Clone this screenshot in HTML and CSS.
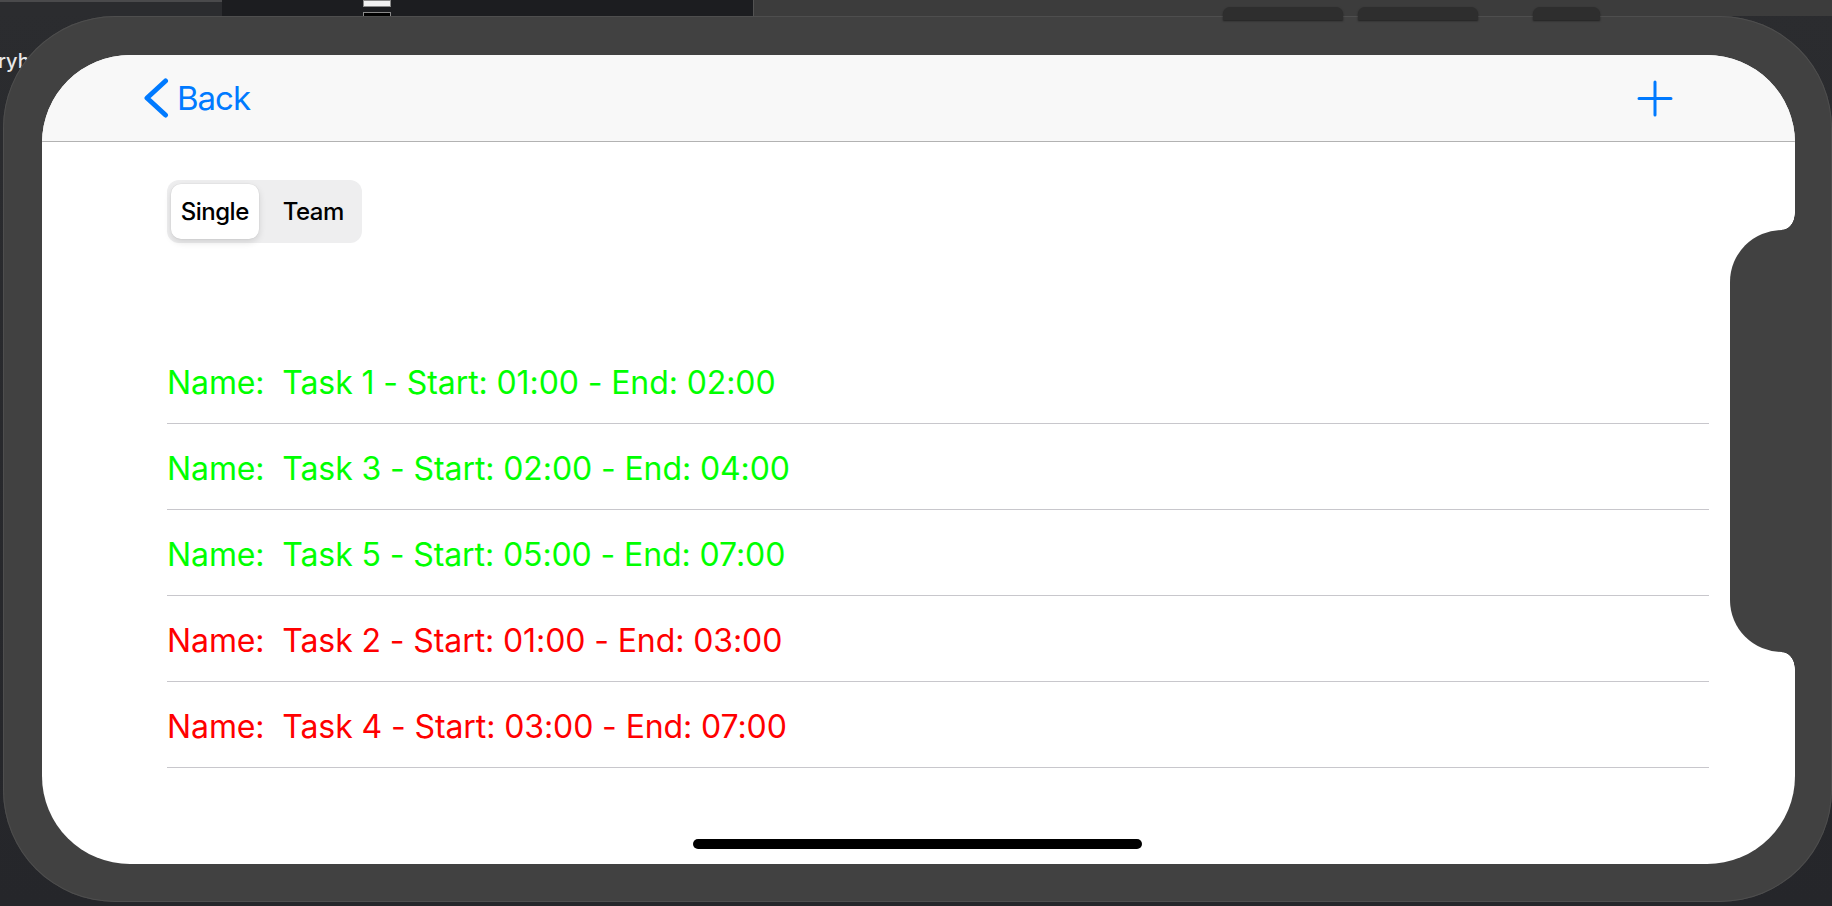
FILE: index.html
```html
<!DOCTYPE html>
<html lang="en">
<head>
<meta charset="utf-8">
<title>Tasks</title>
<link rel="stylesheet" href="styles.css">
</head>
<body>
<div class="desktop">
  <div class="desk-top">
    <div class="desk-left"></div>
    <div class="desk-window">
      <span class="win-box win-box-a"></span>
      <span class="win-box win-box-b"></span>
    </div>
    <div class="desk-right"></div>
  </div>
  <div class="desk-label">ryh</div>

  <div class="device">
    <div class="hw-btn hw-btn-1"></div>
    <div class="hw-btn hw-btn-2"></div>
    <div class="hw-btn hw-btn-3"></div>

    <div class="screen">
      <header class="navbar">
        <a class="back">
          <svg class="back-chevron" width="26" height="42" viewBox="0 0 26 42" aria-hidden="true">
            <path d="M22.5 4 L4 21 L22.5 38" fill="none" stroke="#007aff" stroke-width="5" stroke-linecap="round" stroke-linejoin="round"/>
          </svg>
          <span class="back-label">Back</span>
        </a>
        <span class="add">
          <svg width="36" height="37" viewBox="0 0 36 37" aria-hidden="true">
            <path d="M18 2 V35 M2 18.5 H34" fill="none" stroke="#007aff" stroke-width="3" stroke-linecap="round"/>
          </svg>
        </span>
      </header>

      <main class="content">
        <div class="segmented">
          <div class="seg seg-on">Single</div>
          <div class="seg">Team</div>
        </div>

        <ul class="tasks">
          <li class="task task-ok">Name:  Task 1 - Start: 01:00 - End: 02:00</li>
          <li class="task task-ok">Name:  Task 3 - Start: 02:00 - End: 04:00</li>
          <li class="task task-ok">Name:  Task 5 - Start: 05:00 - End: 07:00</li>
          <li class="task task-bad">Name:  Task 2 - Start: 01:00 - End: 03:00</li>
          <li class="task task-bad">Name:  Task 4 - Start: 03:00 - End: 07:00</li>
        </ul>
      </main>

      <div class="notch"></div>
      <div class="fillet fillet-top"></div>
      <div class="fillet fillet-bottom"></div>
      <div class="home-indicator"></div>
    </div>
  </div>
</div>
</body>
</html>
```

FILE: styles.css
```css
html, body {
  margin: 0;
  padding: 0;
}

body {
  width: 1832px;
  height: 906px;
  overflow: hidden;
  background: #27282b;
  font-family: Inter, "Noto Sans", sans-serif;
}

.desktop {
  position: relative;
  width: 1832px;
  height: 906px;
  background: linear-gradient(180deg, #2b2c2f 0%, #25262a 100%);
}

/* strip of the mac desktop above the simulator */
.desk-top {
  display: flex;
  height: 16px;
}

.desk-left {
  width: 222px;
  box-sizing: border-box;
  background: #2b2c2f;
  border-top: 2px solid #4a4a4c;
}

.desk-window {
  position: relative;
  width: 532px;
  box-sizing: border-box;
  background: #1c1d20;
  border-right: 1px solid #525252;
}

.win-box {
  position: absolute;
  left: 141px;
  width: 28px;
  box-sizing: border-box;
  border: 1px solid #8a8a8a;
}

.win-box-a {
  top: 0;
  height: 7px;
  background: #f2f2f2;
}

.win-box-b {
  top: 12px;
  height: 8px;
  background: #000;
}

.desk-right {
  flex: 1;
  background: #3c3c3c;
}

.desk-label {
  position: absolute;
  left: -2px;
  top: 49px;
  color: #e8e8e8;
  font-size: 20px;
  font-weight: 500;
}

/* simulator device */
.device {
  position: relative;
  margin-left: 3px;
  width: 1829px;
  height: 886px;
  box-sizing: border-box;
  padding: 39px 37px 38px 39px;
  background: #414141;
  border-radius: 112px;
  box-shadow: inset 0 0 0 1px #4e4e4e;
}

.hw-btn {
  position: absolute;
  top: -9px;
  height: 13px;
  background: #2e2e2e;
  border-radius: 7px 7px 0 0;
  box-shadow: 0 1px 2px rgba(0, 0, 0, 0.5);
}

.hw-btn-1 { left: 1220px; width: 120px; }
.hw-btn-2 { left: 1355px; width: 120px; }
.hw-btn-3 { left: 1530px; width: 67px; }

.screen {
  position: relative;
  width: 100%;
  height: 100%;
  background: #fff;
  border-radius: 88px;
  overflow: hidden;
  display: flex;
  flex-direction: column;
}

/* navigation bar */
.navbar {
  flex-shrink: 0;
  height: 87px;
  box-sizing: border-box;
  padding: 0 122px 0 101px;
  display: flex;
  align-items: center;
  justify-content: space-between;
  background: #f8f8f8;
  border-bottom: 1px solid #b2b2b2;
}

.back {
  display: flex;
  align-items: center;
  gap: 8px;
  color: #007aff;
  font-size: 33px;
  letter-spacing: -1px;
  text-decoration: none;
}

.back-chevron {
  display: block;
}

.add svg {
  display: block;
}

/* content */
.content {
  padding: 38px 0 0 125px;
}

.segmented {
  display: grid;
  grid-template-columns: 97.5px 97.5px;
  width: 195px;
  height: 63px;
  background: #eeeeef;
  border-radius: 12px;
}

.seg {
  display: flex;
  align-items: center;
  justify-content: center;
  font-size: 24px;
  font-weight: 500;
  letter-spacing: -0.5px;
  color: #000;
}

.seg-on {
  margin: 4px 6px 4px 4px;
  background: #fff;
  border-radius: 10px;
  box-shadow: 0 3px 7px rgba(0, 0, 0, 0.13), 0 0 0 0.5px rgba(0, 0, 0, 0.05);
}

.tasks {
  list-style: none;
  margin: 95px 0 0;
  padding: 0;
  width: 1542px;
}

.task {
  height: 86px;
  box-sizing: border-box;
  padding-top: 4px;
  display: flex;
  align-items: center;
  border-bottom: 1px solid #c8c7cc;
  font-size: 32px;
  letter-spacing: -0.1px;
  white-space: pre;
}

.task-ok { color: #00ff00; }
.task-bad { color: #ff0000; }

/* sensor housing cut into the screen */
.notch {
  position: absolute;
  right: 0;
  top: 175px;
  width: 65px;
  height: 422px;
  background: #414141;
  border-radius: 52px 0 0 52px;
}

.fillet {
  position: absolute;
  right: 0;
  width: 13px;
  height: 17px;
}

.fillet-top {
  top: 158px;
  background: radial-gradient(ellipse 13px 17px at 0 0, transparent 96%, #414141 100%);
}

.fillet-bottom {
  top: 597px;
  background: radial-gradient(ellipse 13px 17px at 0 100%, transparent 96%, #414141 100%);
}

.home-indicator {
  position: absolute;
  left: 651px;
  bottom: 15px;
  width: 449px;
  height: 10px;
  border-radius: 5px;
  background: #000;
}
```
